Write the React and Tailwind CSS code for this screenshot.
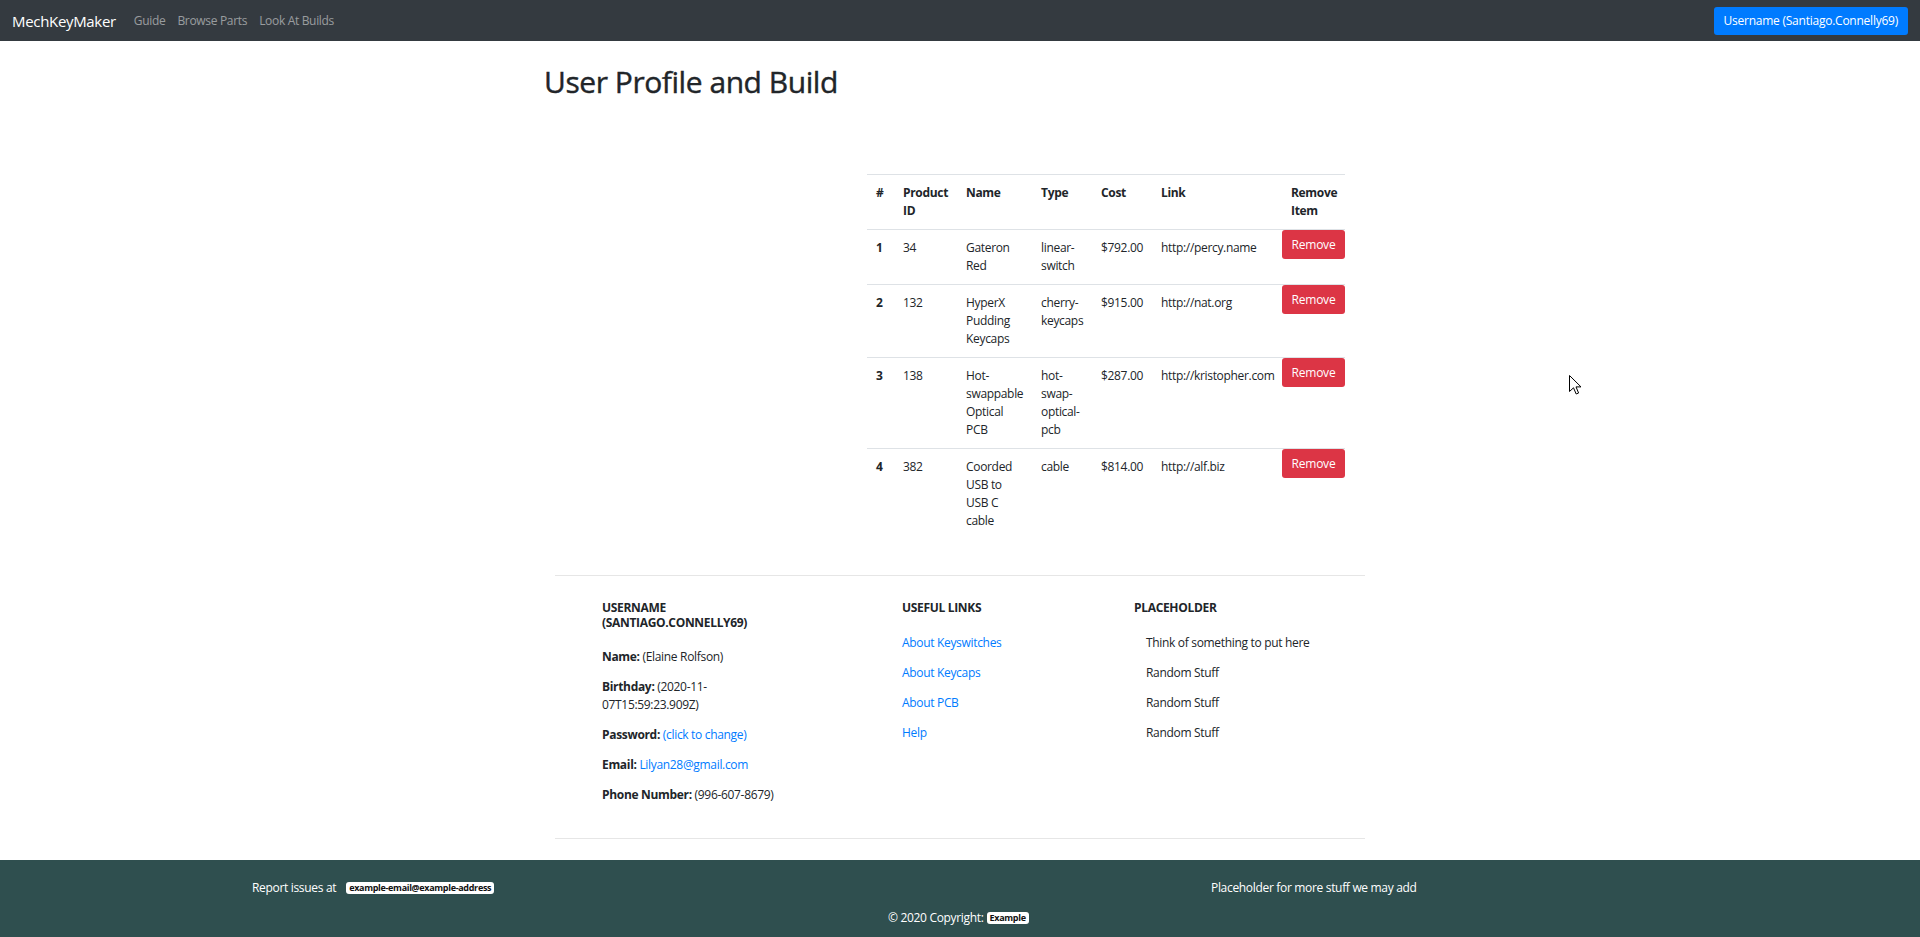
import React from "react";

const rows = [
  { n: "1", id: "34", name: ["Gateron", "Red"], type: ["linear-", "switch"], cost: "$792.00", link: "http://percy.name" },
  { n: "2", id: "132", name: ["HyperX", "Pudding", "Keycaps"], type: ["cherry-", "keycaps"], cost: "$915.00", link: "http://nat.org" },
  { n: "3", id: "138", name: ["Hot-", "swappable", "Optical", "PCB"], type: ["hot-", "swap-", "optical-", "pcb"], cost: "$287.00", link: "http://kristopher.com" },
  { n: "4", id: "382", name: ["Coorded", "USB to", "USB C", "cable"], type: ["cable"], cost: "$814.00", link: "http://alf.biz" },
];

function Lines({ items }) {
  return (
    <>
      {items.map((t, i) => (
        <div key={i} className="whitespace-nowrap">{t}</div>
      ))}
    </>
  );
}

export default function App() {
  return (
    <div className="relative font-['Segoe_UI','Open_Sans',sans-serif] tracking-[-0.02em] text-[#212529] bg-white">
      {/* Navbar */}
      <nav className="h-[41px] bg-[#343a40] flex items-center justify-between pl-[12px] pr-[12px]">
        <div className="flex items-center">
          <span className="text-white text-[15px] leading-[22px] mr-[12px]">MechKeyMaker</span>
          <a className="text-[12px] leading-[18px] px-[6px] text-[rgba(255,255,255,0.5)]">Guide</a>
          <a className="text-[12px] leading-[18px] px-[6px] text-[rgba(255,255,255,0.5)]">Browse Parts</a>
          <a className="text-[12px] leading-[18px] px-[6px] text-[rgba(255,255,255,0.5)]">Look At Builds</a>
        </div>
        <button className="h-[28px] px-[10px] bg-[#007bff] text-white text-[12px] leading-[18px] rounded-[3px] tracking-[-0.02em]">
          Username (Santiago.Connelly69)
        </button>
      </nav>

      {/* Main */}
      <main className="w-[832px] mx-auto">
        <h1 className="mt-[23px] text-[30px] leading-[36px] font-medium tracking-[-0.015em] [-webkit-text-stroke:0.4px_#212529]">User Profile and Build</h1>
        <div className="mt-[74px] ml-[323px]">
          <table className="table-fixed border-collapse w-[478px] text-[12px] leading-[18px]">
            <colgroup>
              <col className="w-[27px]" />
              <col className="w-[63px]" />
              <col className="w-[75px]" />
              <col className="w-[60px]" />
              <col className="w-[60px]" />
              <col className="w-[130px]" />
              <col className="w-[63px]" />
            </colgroup>
            <thead>
              <tr className="border-t border-[#dee2e6]">
                <th className="p-[9px] text-left align-top font-bold">#</th>
                <th className="p-[9px] text-left align-top font-bold">Product<br />ID</th>
                <th className="p-[9px] text-left align-top font-bold">Name</th>
                <th className="p-[9px] text-left align-top font-bold">Type</th>
                <th className="p-[9px] text-left align-top font-bold">Cost</th>
                <th className="p-[9px] text-left align-top font-bold">Link</th>
                <th className="p-[9px] text-left align-top font-bold">Remove<br />Item</th>
              </tr>
            </thead>
            <tbody>
              {rows.map((r) => (
                <tr key={r.n} className="border-t border-[#dee2e6]">
                  <td className="p-[9px] align-top font-bold">{r.n}</td>
                  <td className="p-[9px] align-top">{r.id}</td>
                  <td className="p-[9px] align-top"><Lines items={r.name} /></td>
                  <td className="p-[9px] align-top"><Lines items={r.type} /></td>
                  <td className="p-[9px] align-top">{r.cost}</td>
                  <td className="p-[9px] align-top whitespace-nowrap">{r.link}</td>
                  <td className="p-0 align-top">
                    <button className="w-[63px] h-[29px] bg-[#dc3545] text-white text-[12px] leading-[18px] rounded-[3px] tracking-[-0.02em]">
                      Remove
                    </button>
                  </td>
                </tr>
              ))}
            </tbody>
          </table>
        </div>
      </main>

      {/* Footer info */}
      <section className="w-[810px] mx-auto mt-[36px]">
        <div className="h-px bg-[#e6e6e6]" />
        <div className="flex pl-[47px] pt-[25px] pb-[22px] text-[12px] leading-[18px]">
          <div className="w-[300px]">
            <h6 className="uppercase font-bold text-[12px] leading-[14.5px] mb-[18px]">
              Username<br />(Santiago.Connelly69)
            </h6>
            <p className="mb-[12px]"><b>Name:</b> (Elaine Rolfson)</p>
            <p className="mb-[12px]"><b>Birthday:</b> (2020-11-<br />07T15:59:23.909Z)</p>
            <p className="mb-[12px]"><b>Password:</b> <a className="text-[#007bff]">(click to change)</a></p>
            <p className="mb-[12px]"><b>Email:</b> <a className="text-[#007bff]">Lilyan28@gmail.com</a></p>
            <p className="mb-[12px]"><b>Phone Number:</b> (996-607-8679)</p>
          </div>
          <div className="w-[232px]">
            <h6 className="uppercase font-bold text-[12px] leading-[14.5px] mb-[18px]">Useful links</h6>
            <p className="mb-[12px]"><a className="text-[#007bff]">About Keyswitches</a></p>
            <p className="mb-[12px]"><a className="text-[#007bff]">About Keycaps</a></p>
            <p className="mb-[12px]"><a className="text-[#007bff]">About PCB</a></p>
            <p className="mb-[12px]"><a className="text-[#007bff]">Help</a></p>
          </div>
          <div>
            <h6 className="uppercase font-bold text-[12px] leading-[14.5px] mb-[18px]">Placeholder</h6>
            <ul className="pl-[12px]">
              <li className="mb-[12px]">Think of something to put here</li>
              <li className="mb-[12px]">Random Stuff</li>
              <li className="mb-[12px]">Random Stuff</li>
              <li className="mb-[12px]">Random Stuff</li>
            </ul>
          </div>
        </div>
        <div className="h-px bg-[#e6e6e6]" />
      </section>

      {/* Bottom footer */}
      <footer className="mt-[21px] h-[78px] bg-[#2f4f4f] text-white text-[12px] leading-[18px] pt-[19px]">
        <div className="flex items-center">
          <div className="w-[1211px] pl-[252px] flex items-center">
            <span>Report issues at</span>
            <span className="ml-[10px] bg-white text-[#111] font-bold text-[9px] leading-[12px] px-[3px] rounded-[3px]">
              example-email@example-address
            </span>
          </div>
          <span>Placeholder for more stuff we may add</span>
        </div>
        <div className="mt-[12px] pl-[888px] flex items-center">
          <span>© 2020 Copyright:</span>
          <span className="ml-[3px] bg-white text-[#111] font-bold text-[9px] leading-[12px] px-[3px] rounded-[3px]">Example</span>
        </div>
      </footer>

      {/* Mouse cursor */}
      <svg className="absolute left-[1569px] top-[375px]" width="13" height="20" viewBox="0 0 13 20">
        <path d="M0.5 0.5 L0.5 16.5 L4.5 12.8 L7.2 19 L9.6 18 L7 11.9 L12 11.9 Z" fill="white" stroke="black" strokeWidth="1" strokeLinejoin="round" />
      </svg>
    </div>
  );
}
